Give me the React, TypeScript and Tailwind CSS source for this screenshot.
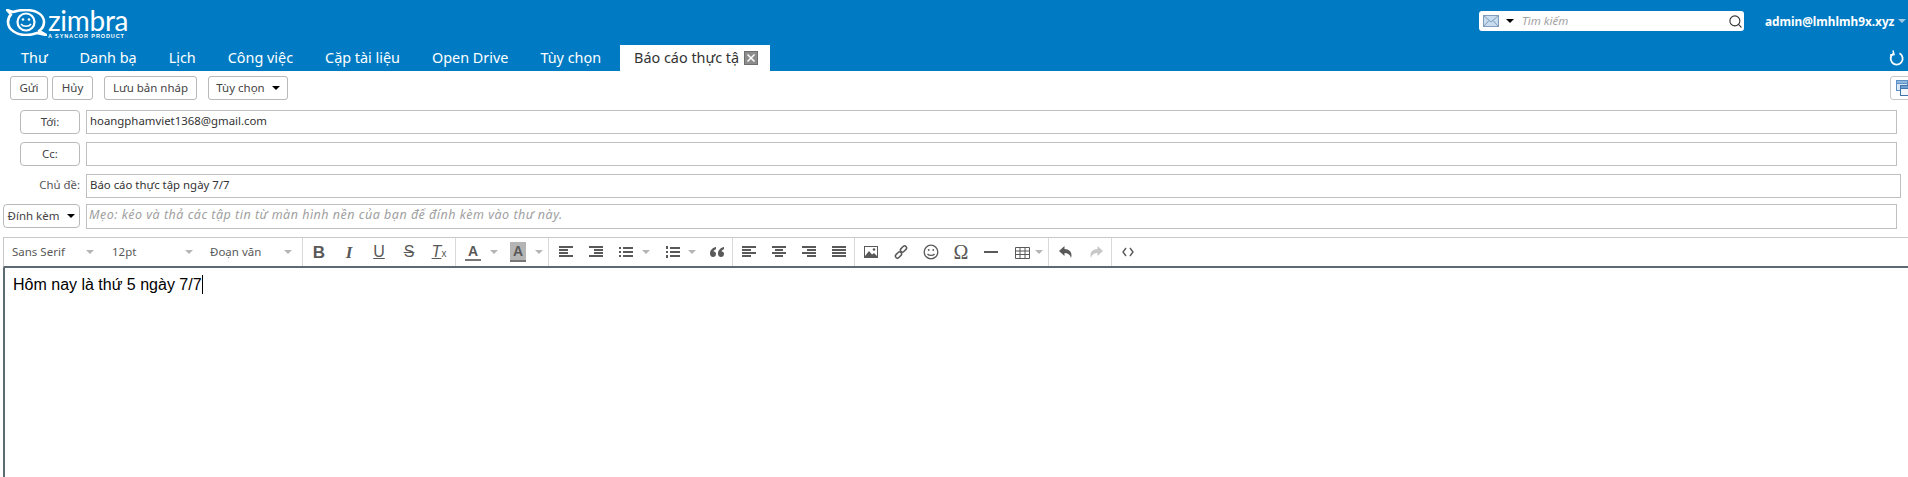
import React from 'react';
import { Search } from 'lucide-react';

const ui = "font-['Noto_Sans','Open_Sans',sans-serif]";

function Caret({ className = 'border-t-black' }: { className?: string }) {
  return <span className={`inline-block w-0 h-0 border-x-[4px] border-x-transparent border-t-[4px] ${className}`}></span>;
}

function Btn({ children, className = '' }: { children: React.ReactNode; className?: string }) {
  return (
    <div className={`h-[24px] flex items-center justify-center bg-white border border-[#b9b9b9] rounded-[3px] text-[11.500px] text-[#444] ${className}`}>
      {children}
    </div>
  );
}

function Logo() {
  return (
    <div className="flex items-start">
      <svg width="41" height="27" viewBox="0 0 41 27" fill="none" stroke="white" className="ml-[6px] mt-[9px]">
        <path d="M1 1 L7 3 C11 1.500 15 1 20 1 C29 1 38 5 38 13 C38 17 36 20 33 22 L40 26 L31 24 C27 25.500 24 26 20 26 C11 26 2 21 2 13 C2 9 4 6.500 5 5.500 Z" strokeWidth="2.600" strokeLinejoin="round" />
        <circle cx="20" cy="13" r="8.500" strokeWidth="2.200" fill="#007bc3" />
        <circle cx="17" cy="10.500" r="1.300" fill="white" stroke="none" />
        <circle cx="23" cy="10.500" r="1.300" fill="white" stroke="none" />
        <path d="M15 15 C17 18 23 18 25 15" strokeWidth="1.600" />
      </svg>
      <div className="ml-[1px] flex flex-col text-white">
        <span className="font-['Lato',sans-serif] font-normal text-[28px] leading-[24px] mt-[8px] tracking-[-0.3px]">zimbra</span>
        <span className="font-['Liberation_Sans',sans-serif] font-bold text-[5.500px] leading-[6px] tracking-[0.9px] mt-[1px]">A SYNACOR PRODUCT</span>
      </div>
    </div>
  );
}

const tabs = ['Thư', 'Danh bạ', 'Lịch', 'Công việc', 'Cặp tài liệu', 'Open Drive', 'Tùy chọn'];

function Ic({ children }: { children: React.ReactNode }) {
  return (
    <svg width="16" height="16" viewBox="0 0 16 16" fill="#595959">
      {children}
    </svg>
  );
}

function Tool({ children, caret = false, className = 'w-[30px] gap-[5px]' }: { children: React.ReactNode; caret?: boolean; className?: string }) {
  return (
    <div className={`h-full flex items-center justify-center shrink-0 ${className}`}>
      {children}
      {caret && <Caret className="border-t-[#b5b5b5]" />}
    </div>
  );
}

function Letter({ children, className = '' }: { children: React.ReactNode; className?: string }) {
  return <span className={`text-[#595959] text-[16px] leading-none font-['Liberation_Sans',sans-serif] ${className}`}>{children}</span>;
}

function FormatSelect({ label, className }: { label: string; className: string }) {
  return (
    <div className={`flex items-center justify-between text-[11.500px] text-[#595959] ${className}`}>
      <span>{label}</span>
      <Caret className="border-t-[#b5b5b5]" />
    </div>
  );
}

function Bars({ rows }: { rows: [number, number][] }) {
  return (
    <Ic>
      {rows.map(([x, w], i) => (
        <rect key={i} x={x} y={2 + i * 3} width={w} height="2" />
      ))}
    </Ic>
  );
}

export default function App() {
  return (
    <div className={`w-[1908px] h-[477px] overflow-hidden flex flex-col bg-white ${ui}`}>
      {/* header */}
      <div className="bg-[#007bc3] h-[71px] shrink-0 flex flex-col">
        <div className="h-[45px] flex items-start justify-between">
          <Logo />
          <div className="flex items-start">
            <div className="mt-[11px] w-[265px] h-[20px] bg-white rounded-[3px] flex items-center pl-[4px] pr-[1px]">
              <svg width="16" height="12" viewBox="0 0 16 12" className="shrink-0">
                <rect x="0.500" y="0.500" width="15" height="11" fill="#c9dcee" stroke="#7f9dbd" />
                <path d="M1 1 L8 7 L15 1 M1 11 L6 5.500 M15 11 L10 5.500" fill="none" stroke="#7f9dbd" />
              </svg>
              <Caret className="ml-[7px]" />
              <span className="ml-[8px] text-[11.500px] italic text-[#a2a2a2] flex-1">Tìm kiếm</span>
              <Search size={15} strokeWidth={1.800} className="text-[#333]" />
            </div>
            <div className="mt-[11px] ml-[21px] w-[143px] pr-[2px] flex items-center justify-between text-white font-bold text-[11.800px] leading-[20px]">
              <span>admin@lmhlmh9x.xyz</span>
              <Caret className="border-t-[#9fc8e4]" />
            </div>
          </div>
        </div>
        <div className="h-[26px] flex items-stretch pl-[5px] pr-[3px]">
          {tabs.map((t) => (
            <div key={t} className="px-[16px] flex items-center text-white text-[14.400px] whitespace-nowrap">{t}</div>
          ))}
          <div className="ml-[3px] w-[150px] bg-white flex items-center pl-[14px] gap-[5px] text-[14.400px] text-[#333] whitespace-nowrap">
            <span>Báo cáo thực tậ</span>
            <span className="w-[14px] h-[14px] bg-[#8c8c8c] border border-[#6f6f6f] text-white flex items-center justify-center">
              <svg width="10" height="10" viewBox="0 0 10 10"><path d="M1.500 1.500 L8.500 8.500 M8.500 1.500 L1.500 8.500" stroke="white" strokeWidth="1.500" /></svg>
            </span>
          </div>
          <div className="ml-auto flex items-center">
            <svg width="16" height="16" viewBox="0 0 16 16" fill="none" stroke="white" strokeWidth="1.800">
              <path d="M10.500 3.300 A6 6 0 1 1 4.500 3.500" />
              <path d="M4 0.500 L5 4.500 L1 5" strokeWidth="1.500" />
            </svg>
          </div>
        </div>
      </div>

      {/* action bar */}
      <div className="h-[29px] shrink-0 pt-[5px] pl-[10px] flex items-start">
        <Btn className="w-[38px]">Gửi</Btn>
        <Btn className="w-[41px] ml-[4px]">Hủy</Btn>
        <Btn className="w-[93px] ml-[11px]">Lưu bản nháp</Btn>
        <Btn className="w-[80px] ml-[11px] gap-[7px]">Tùy chọn <Caret /></Btn>
        <Btn className="w-[30px] ml-auto mr-[-12px] justify-start pl-[5px] border-[#c8c8c8]">
          <svg width="16" height="16" viewBox="0 0 16 16">
            <rect x="0.500" y="0.500" width="11" height="10" fill="#dbe9f7" stroke="#5e8fc4" />
            <rect x="0.500" y="0.500" width="11" height="3" fill="#8fb8e0" stroke="#5e8fc4" />
            <rect x="4.500" y="5.500" width="11" height="10" fill="#f2f7fc" stroke="#3f74ac" />
            <rect x="4.500" y="5.500" width="11" height="3" fill="#6f9fd0" stroke="#3f74ac" />
          </svg>
        </Btn>
      </div>

      {/* address fields */}
      <div className="shrink-0 h-[137px] pt-[10px] flex flex-col text-[11.400px] text-[#333]">
        <div className="flex h-[24px] pl-[20px] pr-[11px]">
          <Btn className="w-[60px] rounded-[4px] border-[#9a9a9a]">Tới:</Btn>
          <div className="ml-[6px] flex-1 border border-[#c0c0c0] px-[3px] leading-[20px]">hoangphamviet1368@gmail.com</div>
        </div>
        <div className="flex h-[24px] mt-[8px] pl-[20px] pr-[11px]">
          <Btn className="w-[60px] rounded-[4px] border-[#9a9a9a]">Cc:</Btn>
          <div className="ml-[6px] flex-1 border border-[#c0c0c0]"></div>
        </div>
        <div className="flex h-[24px] mt-[8px] pl-[20px] pr-[7px]">
          <div className="w-[60px] text-right text-[#555] leading-[22px]">Chủ đề:</div>
          <div className="ml-[6px] flex-1 border border-[#c0c0c0] px-[3px] leading-[20px]">Báo cáo thực tập ngày 7/7</div>
        </div>
        <div className="flex h-[25px] mt-[6px] pl-[3px] pr-[11px]">
          <Btn className="w-[77px] h-[24px] rounded-[4px] border-[#9a9a9a] gap-[8px]">Đính kèm <Caret /></Btn>
          <div className="ml-[6px] flex-1 border border-[#c0c0c0] px-[2px] leading-[20px] italic text-[#a0a0a0] text-[12.500px] tracking-[0.5px]">Mẹo: kéo và thả các tập tin từ màn hình nền của bạn để đính kèm vào thư này.</div>
        </div>
      </div>

      {/* editor toolbar */}
      <div className="h-[28px] shrink-0 ml-[3px] border-t border-[#c8c8c8] flex items-stretch border-b-2 border-b-[#5c6b73] border-l border-l-[#c8c8c8] box-content">
        <div className="w-[299px] flex pl-[8px] border-r border-[#d9d9d9]">
          <FormatSelect label="Sans Serif" className="w-[100px] pr-[18px]" />
          <FormatSelect label="12pt" className="w-[98px] pr-[17px]" />
          <FormatSelect label="Đoạn văn" className="w-[90px] pr-[8px]" />
        </div>
        <div className="w-[153px] flex pl-[1px] border-r border-[#d9d9d9]">
          <Tool><Letter className="font-bold text-[17px]">B</Letter></Tool>
          <Tool><Letter className="italic font-bold font-['Liberation_Serif',serif] text-[17px]">I</Letter></Tool>
          <Tool><Letter className="underline">U</Letter></Tool>
          <Tool><Letter className="line-through">S</Letter></Tool>
          <Tool><Letter className="italic underline">T<span className="text-[10px] not-italic inline-block">x</span></Letter></Tool>
        </div>
        <div className="w-[93px] flex border-r border-[#d9d9d9] pl-[2px]">
          <Tool caret className="w-[47px] gap-[9px]">
            <span className="flex flex-col items-center w-[16px] border-b-2 border-[#777] font-['Liberation_Sans',sans-serif] font-bold text-[14px] leading-[16px] text-[#595959]">A</span>
          </Tool>
          <Tool caret className="w-[47px] gap-[9px] ml-[-2px]">
            <span className="flex flex-col items-center w-[16px] h-[20px] bg-[#b5b5b5] border-b-2 border-[#777] font-['Liberation_Sans',sans-serif] font-bold text-[14px] leading-[18px] text-[#595959]">A</span>
          </Tool>
        </div>
        <div className="w-[184px] flex pl-[2px] border-r border-[#d9d9d9]">
          <Tool><Bars rows={[[1, 14], [1, 9], [1, 9], [1, 14]]} /></Tool>
          <Tool><Bars rows={[[1, 14], [6, 9], [6, 9], [1, 14]]} /></Tool>
          <Tool caret className="w-[46px] gap-[8px]">
            <Ic>
              <rect x="1" y="3" width="2" height="2" /><rect x="1" y="7" width="2" height="2" /><rect x="1" y="11" width="2" height="2" />
              <rect x="5" y="3" width="10" height="2" /><rect x="5" y="7" width="10" height="2" /><rect x="5" y="11" width="10" height="2" />
            </Ic>
          </Tool>
          <Tool caret className="w-[47px] gap-[7px]">
            <Ic>
              <rect x="1" y="2" width="2" height="3" /><rect x="1" y="7" width="2" height="2" /><rect x="1" y="11" width="2" height="3" />
              <rect x="5" y="3" width="10" height="2" /><rect x="5" y="7" width="10" height="2" /><rect x="5" y="11" width="10" height="2" />
            </Ic>
          </Tool>
          <Tool className="w-[30px] ml-[-2px]">
            <Ic>
              <path d="M7 3 C4 3.500 1 6 1 9.500 C1 11.500 2.300 13 4 13 C5.700 13 7 11.700 7 10 C7 8.400 5.700 7.300 4.300 7.300 C4.800 6.300 6 5.500 7 5.200 Z" />
              <path d="M15 3 C12 3.500 9 6 9 9.500 C9 11.500 10.300 13 12 13 C13.700 13 15 11.700 15 10 C15 8.400 13.700 7.300 12.300 7.300 C12.800 6.300 14 5.500 15 5.200 Z" />
            </Ic>
          </Tool>
        </div>
        <div className="w-[122px] flex pl-[1px] border-r border-[#d9d9d9]">
          <Tool><Bars rows={[[1, 14], [1, 9], [1, 14], [1, 9]]} /></Tool>
          <Tool><Bars rows={[[1, 14], [4, 8], [1, 14], [4, 8]]} /></Tool>
          <Tool><Bars rows={[[1, 14], [6, 9], [1, 14], [6, 9]]} /></Tool>
          <Tool><Bars rows={[[1, 14], [1, 14], [1, 14], [1, 14]]} /></Tool>
        </div>
        <div className="w-[194px] flex pl-[1px] border-r border-[#d9d9d9]">
          <Tool>
            <Ic>
              <path fillRule="evenodd" d="M1 2 H15 V14 H1 Z M2 3 V12 L6 7 L9 10.500 L11 9 L14 12 V3 Z" />
              <circle cx="11" cy="5.500" r="1.300" />
            </Ic>
          </Tool>
          <Tool>
            <svg width="16" height="16" viewBox="0 0 16 16" fill="none" stroke="#595959" strokeWidth="1.500">
              <rect x="8.500" y="1.500" width="4" height="7" rx="2" transform="rotate(45 10.500 5)" />
              <rect x="3.500" y="7.500" width="4" height="7" rx="2" transform="rotate(45 5.500 11)" />
            </svg>
          </Tool>
          <Tool>
            <svg width="16" height="16" viewBox="0 0 16 16" fill="none" stroke="#595959" strokeWidth="1.300">
              <circle cx="8" cy="8" r="6.800" />
              <circle cx="5.700" cy="6" r="0.900" fill="#595959" stroke="none" />
              <circle cx="10.300" cy="6" r="0.900" fill="#595959" stroke="none" />
              <path d="M4.500 9.800 C6 12 10 12 11.500 9.800" />
            </svg>
          </Tool>
          <Tool><Letter className="font-['Liberation_Serif',serif] text-[20px]">Ω</Letter></Tool>
          <Tool><Ic><rect x="1" y="7" width="14" height="2" /></Ic></Tool>
          <Tool caret className="w-[44px] pl-[1px] gap-[5px]">
            <svg width="15" height="14" viewBox="0 0 15 14" fill="none" stroke="#595959">
              <path d="M0.500 2.500 H14.500 V13.500 H0.500 Z M0.500 6 H14.500 M0.500 9.500 H14.500 M5 2.500 V13.500 M10 2.500 V13.500" />
            </svg>
          </Tool>
        </div>
        <div className="w-[63px] flex pl-[2px] border-r border-[#d9d9d9]">
          <Tool><Ic><path d="M6.500 2 L1 7 L6.500 12 V9 C10 9 12 10.500 13 14 C14.500 9.500 12.500 5.200 6.500 5 Z" /></Ic></Tool>
          <Tool><svg width="16" height="16" viewBox="0 0 16 16" fill="#c8c8c8"><path d="M9.500 2 L15 7 L9.500 12 V9 C6 9 4 10.500 3 14 C1.500 9.500 3.500 5.200 9.500 5 Z" /></svg></Tool>
        </div>
        <div className="w-[33px] flex pl-[1px]">
          <Tool>
            <svg width="12" height="10" viewBox="0 0 12 10" fill="none" stroke="#595959" strokeWidth="1.400">
              <path d="M4 1 L1 5 L4 9 M8 1 L11 5 L8 9" />
            </svg>
          </Tool>
        </div>
      </div>

      {/* editor body */}
      <div className="flex-1 ml-[3px] border-l-2 border-[#5c6b73] pl-[8px] pt-[7px] font-['Liberation_Sans',sans-serif] text-[16px] leading-[20px] text-black">
        Hôm nay là thứ 5 ngày 7/7<span className="inline-block w-px h-[19px] bg-black align-[-4px]"></span>
      </div>
    </div>
  );
}
